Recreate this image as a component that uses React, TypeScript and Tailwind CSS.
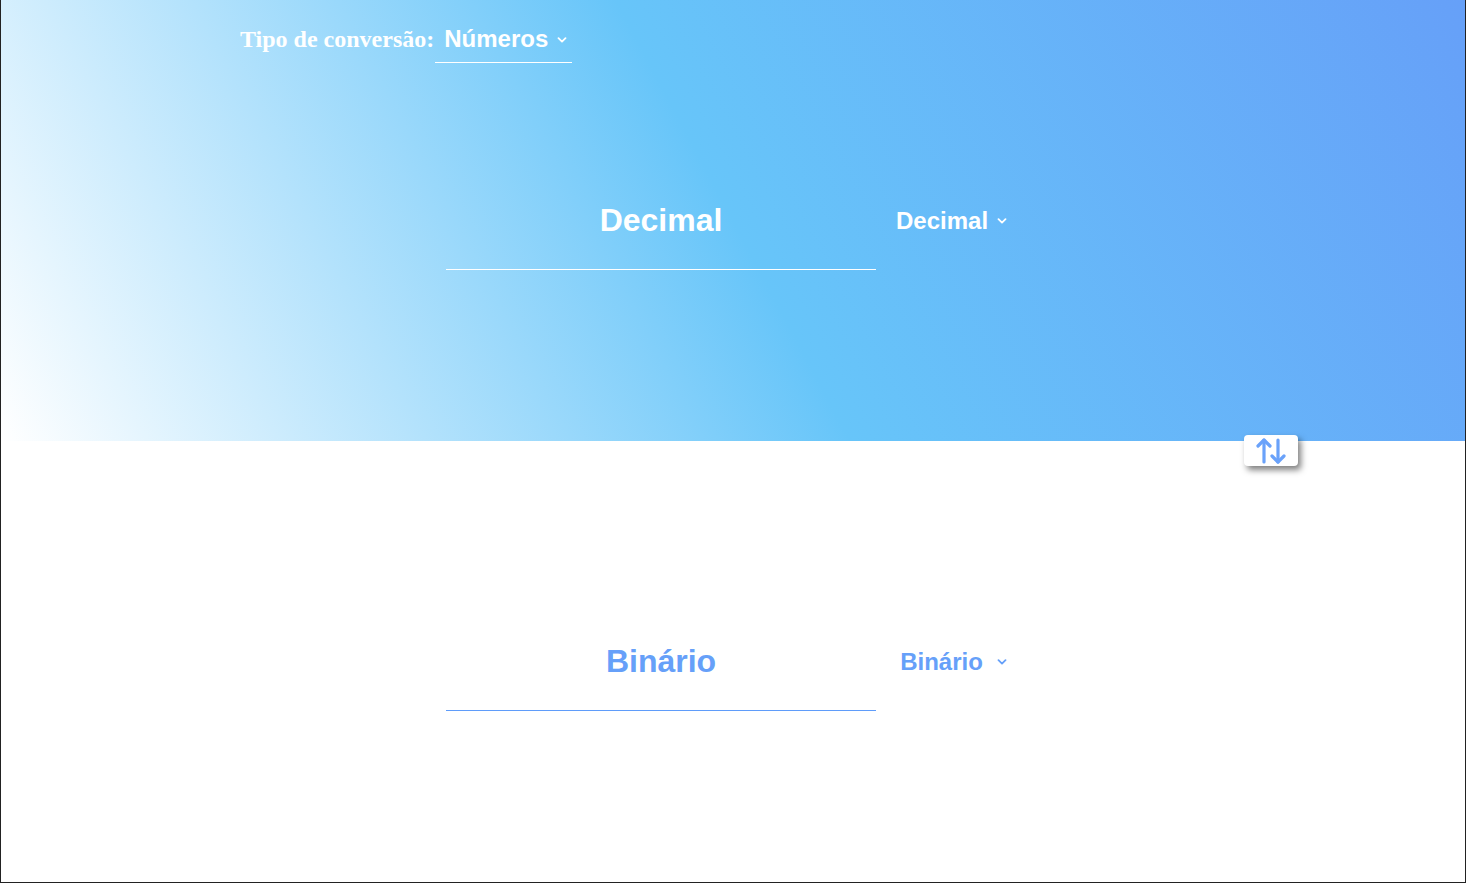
import { useState } from "react";

const sans = "font-['Liberation_Sans',Arial,sans-serif]";

const Chevron = ({ className }: { className?: string }) => (
    <svg width="10" height="6" viewBox="0 0 10 6" fill="none" className={className}>
        <path d="M1.5 1.2 5 4.6 8.5 1.2" stroke="currentColor" strokeWidth="1.8" strokeLinecap="round" strokeLinejoin="round" />
    </svg>
);

const SwapIcon = () => (
    <svg width="30" height="28" viewBox="0 0 30 28" fill="none" stroke="#6aa2fa" strokeWidth="3.2" strokeLinecap="round" strokeLinejoin="round">
        <path d="M8 25V3" />
        <path d="M2 9l6-6 6 6" />
        <path d="M22 3v22" />
        <path d="M16 19l6 6 6-6" />
    </svg>
);

interface IRowProps {
    title: string;
    unit: string;
    light: boolean;
}

const ConvRow = ({ title, unit, light }: IRowProps) => {
    const color = light ? "text-white" : "text-[#66a0f9]";
    return (
        <div className="flex flex-row items-center gap-x-5">
            <div className={`w-[430px] h-[99px] flex items-center justify-center border-b ${light ? "border-white" : "border-[#5f9cfa]"}`}>
                <span className={`${sans} ${color} text-[32px] font-bold leading-none`}>{title}</span>
            </div>
            <div className={`w-[124px] flex flex-row items-center ${color}`}>
                <span className={`${sans} w-[91px] text-center text-[24px] font-bold leading-none`}>{unit}</span>
                <Chevron className="ml-[10px]" />
            </div>
        </div>
    );
};

export default function App() {
    const [tipo] = useState("Números");

    return (
        <div className="w-full h-[883px] flex flex-col bg-white border-x border-b border-[#222]">
            <section className="h-[441px] flex flex-col bg-linear-[62deg,#ffffff_0%,#67c5f9_50%,#66a0f8_100%]">
                <nav className="h-[70px] flex flex-row items-start pl-[239px] pt-[24px]">
                    <span className="font-['Liberation_Serif','Times_New_Roman',serif] text-white text-[24px] font-bold leading-[30px]">
                        Tipo de conversão:
                    </span>
                    <div className="ml-[1px] w-[137px] h-[39px] flex flex-row items-start pl-[9px] border-b border-white text-white">
                        <span className={`${sans} text-[24px] font-bold leading-[30px]`}>{tipo}</span>
                        <Chevron className="ml-[9px] mt-[13px]" />
                    </div>
                </nav>
                <div className="flex-1 flex items-center justify-center pb-[70px]">
                    <ConvRow title="Decimal" unit="Decimal" light />
                </div>
            </section>
            <section className="relative flex-1 flex items-center justify-center">
                <button className="absolute right-[167px] -top-[6px] w-[54px] h-[31px] flex items-center justify-center bg-white rounded-[4px] shadow-[3px_4px_6px_rgba(0,0,0,0.5)]">
                    <SwapIcon />
                </button>
                <ConvRow title="Binário" unit="Binário" light={false} />
            </section>
        </div>
    );
}
